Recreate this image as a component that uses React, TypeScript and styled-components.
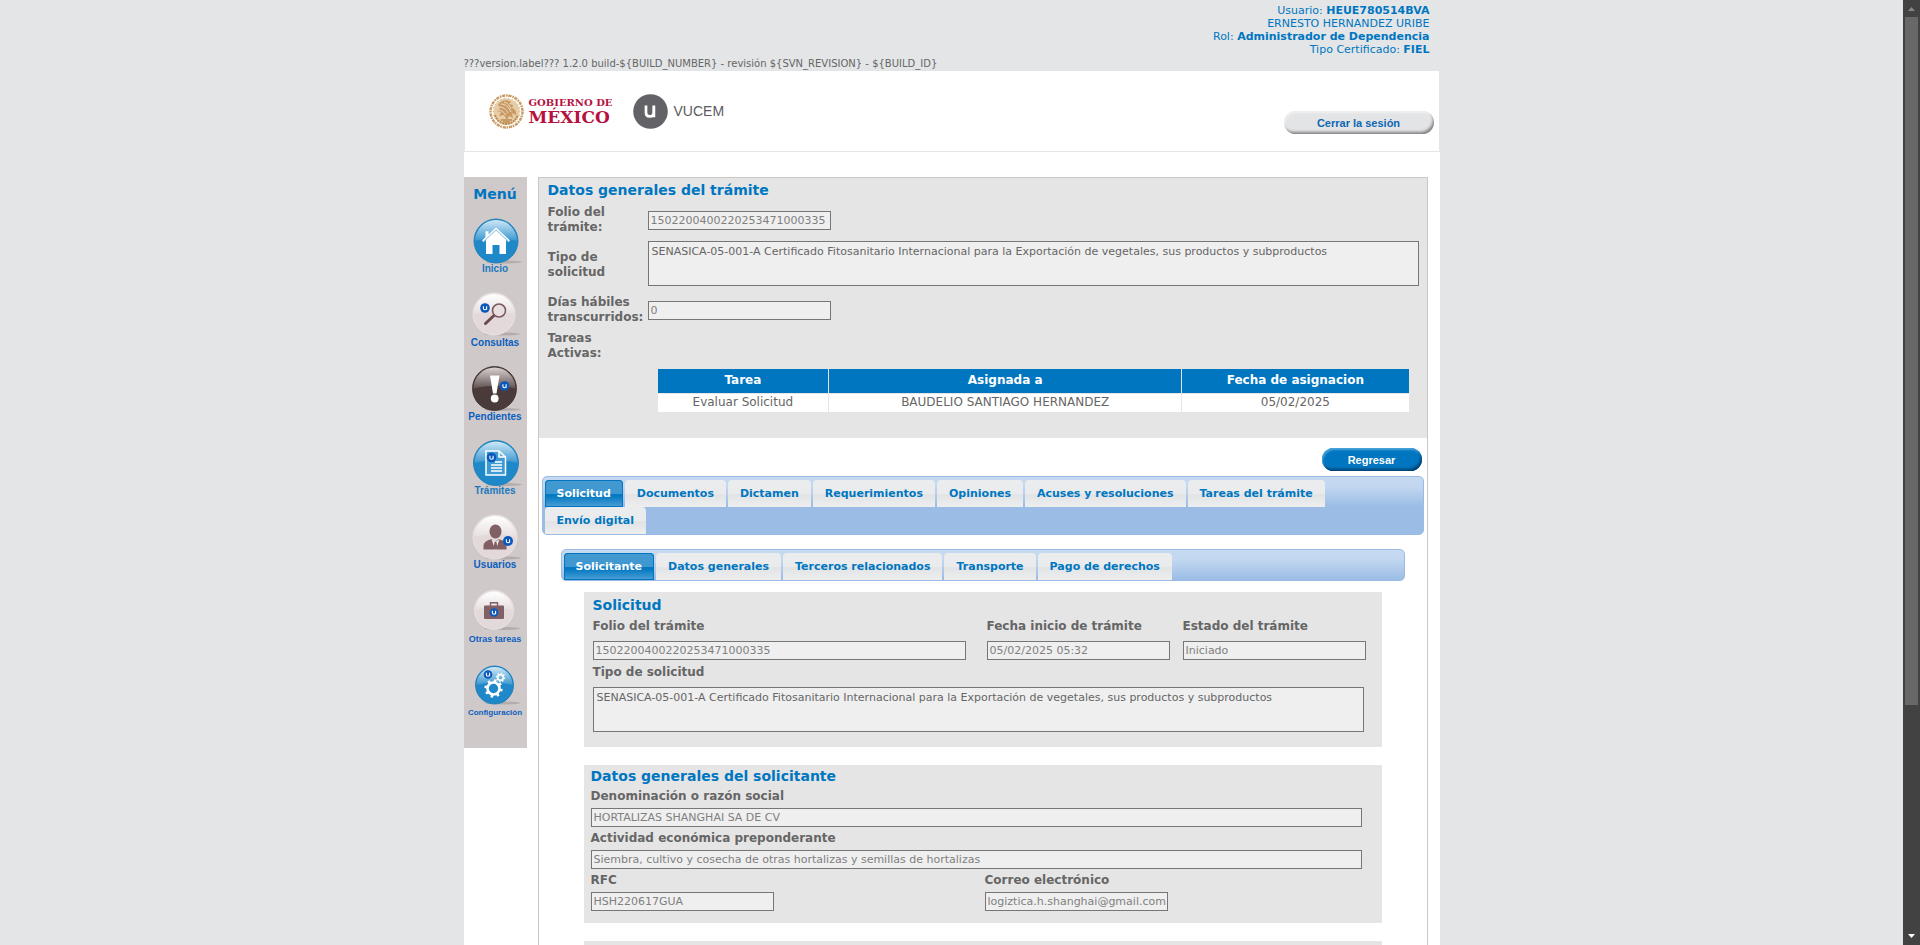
import React from 'react';
import styled, { createGlobalStyle, css } from 'styled-components';

const SANS = '"DejaVu Sans", Verdana, sans-serif';
const ARIAL = '"Liberation Sans", Arial, sans-serif';
const BLUE = '#0076c1';
const TEXT = '#666666';
const PANEL = '#e5e5e5';
const PAGE_BG = '#e3e5e7';

const GlobalStyle = createGlobalStyle`
  *, *::before, *::after { box-sizing: border-box; }
  body {
    margin: 0;
    background: ${PAGE_BG};
    color: ${TEXT};
    font-family: ${SANS};
    font-size: 12px;
  }
  h1, h2, p, ul, dl, dd { margin: 0; padding: 0; }
`;

/* ---------- window frame ---------- */

const Window = styled.div`
  display: flex;
  height: 100vh;
`;

const Viewport = styled.div`
  flex: 1;
  min-width: 0;
  overflow-y: auto;
  scrollbar-width: none;
`;

const ScrollBar = styled.div`
  display: flex;
  flex-direction: column;
  align-items: center;
  width: 17px;
  background: #424242;
`;

const ScrollArrow = styled.svg`
  display: block;
  flex: none;
  width: 17px;
  height: 17px;
`;

const ScrollTrack = styled.div`
  flex: 1;
  width: 13px;
`;

const ScrollThumb = styled.div`
  height: 75.5%;
  background: #686868;
`;

const Page = styled.div`
  max-width: 976px;
  min-height: 100%;
  margin: 0 auto;
  display: flex;
  flex-direction: column;
`;

/* ---------- header ---------- */

const Session = styled.div`
  padding: 4px 10px 0 0;
  color: ${BLUE};
  font-size: 11px;
  line-height: 13px;
  text-align: right;
`;

const Version = styled.p`
  height: 15px;
  font-size: 10px;
  line-height: 15px;
  white-space: nowrap;
`;

const Banner = styled.header`
  display: flex;
  align-items: center;
  height: 80px;
  margin: 0 1px;
  padding: 0 5px 0 24px;
  background: #fff;
`;

const Seal = styled.svg`
  width: 35px;
  height: 35px;
  margin-right: 5px;
`;

const Government = styled.div`
  width: 86px;
  color: #b5123f;
  font-family: "DejaVu Serif", serif;
  font-weight: bold;
  white-space: nowrap;
`;

const GovTop = styled.div`
  font-size: 10px;
  line-height: 11px;
`;

const GovBottom = styled.div`
  font-size: 17px;
  line-height: 18px;
`;

const Vucem = styled.div`
  display: flex;
  align-items: center;
  gap: 6px;
  margin-left: 18px;
  color: #5b5a5e;
  font: 14px ${ARIAL};
`;

const VucemMark = styled.svg`
  width: 35px;
  height: 35px;
`;

const Pill = styled.button<{ $primary?: boolean; $width: number }>`
  width: ${p => p.$width}px;
  height: 23px;
  padding: 0;
  border: 0;
  border-radius: 12px;
  font: bold 11px ${ARIAL};
  cursor: pointer;
  ${p =>
    p.$primary
      ? css`
          color: #fff;
          background: ${BLUE};
          box-shadow: inset -2px -3px 3px -1px #003f6e, inset 1px 2px 2px #4ba3d8;
        `
      : css`
          color: #0c67b4;
          background: #e3e4e5;
          box-shadow: inset -2px -3px 3px -1px #838386, inset 1px 2px 2px #f0f0f0;
        `}
`;

const CloseSession = styled(Pill)`
  margin-left: auto;
  margin-top: 23px;
`;

/* ---------- body ---------- */

const Body = styled.div`
  flex: 1;
  display: flex;
  align-items: flex-start;
  margin-top: 1px;
  padding: 25px 12px 0 0;
  background: #fff;
`;

const Menu = styled.nav`
  width: 63px;
  flex: none;
  margin-right: 11px;
  padding: 8px 0 27px;
  background: #d0c9c9;
  text-align: center;
`;

const MenuTitle = styled.h2`
  color: ${BLUE};
  font-size: 14px;
  line-height: 18px;
`;

const MenuLink = styled.a<{ $size: number; $color: string }>`
  display: flex;
  flex-direction: column;
  align-items: center;
  height: 74px;
  padding-top: 10px;
  color: ${p => p.$color};
  font: bold ${p => p.$size}px/12px ${ARIAL};
  text-decoration: none;
  white-space: nowrap;
`;

const MenuIcon = styled.svg`
  display: block;
  flex: none;
  width: 56px;
  height: 50px;
  overflow: visible;
`;

const Main = styled.main`
  flex: 1;
  min-width: 0;
  border: 1px solid #c8c8c8;
`;

const Title = styled.h2`
  color: ${BLUE};
  font-size: 14px;
  line-height: 18px;
`;

const Summary = styled.section`
  padding: 3px 8px 26px 9px;
  background: ${PANEL};
`;

const SummaryRow = styled.div<{ $minHeight?: number }>`
  display: grid;
  grid-template-columns: 100px 1fr;
  align-items: center;
  min-height: ${p => p.$minHeight ?? 30}px;
  margin-top: 6px;
  line-height: 15px;
  font-weight: bold;
`;

const Label = styled.label`
  font-size: 12px;
  line-height: 15px;
  font-weight: bold;
`;

const TextInput = styled.input<{ $width?: number }>`
  display: block;
  width: ${p => (p.$width ? p.$width + 'px' : '100%')};
  height: 19px;
  padding: 1px 0 1px 2px;
  border: 1px solid #767676;
  border-radius: 0;
  background: #efefef;
  color: #808080;
  font: 11px ${SANS};
`;

const TextArea = styled.textarea`
  display: block;
  align-self: start;
  width: 100%;
  height: 45px;
  padding: 3px;
  border: 1px solid #767676;
  border-radius: 0;
  background: #efefef;
  color: ${TEXT};
  font: 11px/13px ${SANS};
  resize: none;
`;

const TaskTable = styled.table`
  width: calc(100% - 120px);
  margin: 8px 0 0 110px;
  border-spacing: 0;
  border-collapse: collapse;
  table-layout: fixed;
  font-size: 12px;
  line-height: 15px;
  text-align: center;

  th {
    height: 24px;
    padding: 0;
    background: ${BLUE};
    color: #fff;
    border-bottom: 1px solid ${PANEL};
  }
  td {
    height: 19px;
    padding: 0;
    background: #fff;
  }
  th + th, td + td { border-left: 1px solid ${PANEL}; }
`;

const Actions = styled.div`
  display: flex;
  justify-content: flex-end;
  padding: 10px 5px 5px;
`;

const TabBar = styled.div<{ $inset: number }>`
  display: flex;
  flex-wrap: wrap;
  gap: 0 2px;
  margin: 0 ${p => p.$inset}px;
  padding: 3px 2px 0;
  border: 1px solid #9abbe4;
  border-radius: 5px;
  background: linear-gradient(#c5daf1 0, #c3d8f0 9px, #9bbce5 30px);
`;

const Tab = styled.button<{ $active?: boolean }>`
  height: 27px;
  padding: 0 12px;
  border: 0;
  border-radius: 4px 4px 0 0;
  font: bold 11px ${SANS};
  white-space: nowrap;
  cursor: pointer;
  ${p =>
    p.$active
      ? css`
          color: #fff;
          background: linear-gradient(#4399d0 0, #4098d0 50%, #0076c1 54%, #0f7fc5 66%, #4fa0d6 100%);
          box-shadow: inset 0 0 0 1px ${BLUE};
        `
      : css`
          color: ${BLUE};
          background: linear-gradient(#ebecee 0, #e9ebed 50%, #e1e3e5 54%, #eeeeef 100%);
        `}
`;

const Panels = styled.div`
  display: flex;
  flex-direction: column;
  gap: 18px;
  padding: 11px 45px 40px;
`;

const Panel = styled.section<{ $compact?: boolean }>`
  background: ${PANEL};
  padding: ${p => (p.$compact ? '2px 20px 12px 7px' : '4px 16px 15px 9px')};
`;

const EmptyPanel = styled.section`
  min-height: 160px;
  background: ${PANEL};
`;

const Fields = styled.div<{ $columns: string }>`
  display: grid;
  grid-template-columns: ${p => p.$columns};
`;

const Field = styled.div<{ $compact?: boolean }>`
  display: flex;
  flex-direction: column;
  gap: ${p => (p.$compact ? 4 : 7)}px;
  margin-top: ${p => (p.$compact ? 4 : 5)}px;
`;

const WideField = styled(Field)`
  margin-right: 2px;
`;

/* ---------- drawings ---------- */

const tau = Math.PI * 2;
const ring = Array.from({ length: 22 }, (_, i) => (i / 22) * tau);

const MexicoSeal = () => (
  <Seal viewBox="0 0 35 35" aria-label="Escudo Nacional" role="img">
    <circle cx="17.5" cy="17.5" r="16" fill="none" stroke="#c99a63" strokeWidth="2.4" strokeDasharray="3.2 0.9 1.6 0.7" />
    <circle cx="17.5" cy="17.5" r="13.2" fill="#e6cda8" />
    <path d="M9 11c3-5 9-6 13-3l-2 2 4 1-1 3c3 1 5 4 4 7l-4-2 1 5-4-2-2 4-3-5-5 1 2-4-4-1 3-3z" fill="#c99a63" />
    <path d="M10 13c4 0 7 2 9 6M12 10c4 0 8 3 10 8M15 8c4 1 6 4 7 7M9 16c3 0 6 2 8 5" stroke="#f3e4cf" strokeWidth="0.9" fill="none" />
    <path d="M6 21c2 6 7 9 11.5 9s9-3 11.5-9" fill="none" stroke="#bd8a50" strokeWidth="2" strokeDasharray="2 0.8" />
    <path d="M12 26h11M14 28h7" stroke="#bd8a50" strokeWidth="1.3" />
    {ring.map(a => (
      <circle key={a} cx={17.5 + 13.4 * Math.cos(a)} cy={17.5 + 13.4 * Math.sin(a)} r="0.6" fill="#d6b183" />
    ))}
  </Seal>
);

const UMark = ({ x, y, r = 4.5 }: { x: number; y: number; r?: number }) => (
  <g>
    <circle cx={x} cy={y} r={r} fill="#0b58bd" />
    <path
      d={`M${x - 1.6} ${y - 1.8}v2.1q0 1.5 1.6 1.5t1.6-1.5v-2.1v3.6`}
      fill="none"
      stroke="#fff"
      strokeWidth="1.1"
    />
  </g>
);

type Tone = 'blue' | 'light' | 'dark';

const Ball = ({ x, y, r, tone }: { x: number; y: number; r: number; tone: Tone }) => {
  const base = { blue: '#1f88c8', light: '#e3d9da', dark: '#4a3b3a' }[tone];
  const rim = { blue: '#1479b8', light: '#efe8e8', dark: '#3b2d2c' }[tone];
  const top = { blue: '#cfe8f7', light: '#ffffff', dark: '#d8d2d1' }[tone];
  const id = `ball-${tone}-${r}`;
  return (
    <g>
      <ellipse cx={x + 8} cy={y + r - 1} rx="18" ry="1.5" fill="#b3acac" />
      <defs>
        <linearGradient id={id} x1="0" y1="0" x2="0" y2="1">
          <stop offset="0" stopColor={top} />
          <stop offset="1" stopColor={top} stopOpacity="0.15" />
        </linearGradient>
      </defs>
      <circle cx={x} cy={y} r={r} fill={base} stroke={rim} strokeWidth="0.8" />
      <path
        d={`M${x - r + 1} ${y}a${r - 1} ${r - 1} 0 0 1 ${2 * r - 2} 0q${-r + 1} ${-r / 4} ${-2 * r + 2} 0z`}
        fill={`url(#${id})`}
      />
    </g>
  );
};

const gear = (cx: number, cy: number, r: number, w: number) => (
  <g stroke="#fff" fill="none">
    <circle cx={cx} cy={cy} r={r} strokeWidth={w} />
    {Array.from({ length: 8 }, (_, i) => {
      const a = (i / 8) * tau + 0.2;
      return (
        <line
          key={i}
          x1={cx + r * Math.cos(a)}
          y1={cy + r * Math.sin(a)}
          x2={cx + (r + w * 1.2) * Math.cos(a)}
          y2={cy + (r + w * 1.2) * Math.sin(a)}
          strokeWidth={w}
        />
      );
    })}
  </g>
);

const LINK = '#0a5fc0';
const LINK_LIGHT = '#1a78be';

const menu: { label: string; size: number; color: string; icon: React.ReactNode }[] = [
  {
    label: 'Inicio',
    size: 10,
    color: LINK_LIGHT,
    icon: (
      <>
        <Ball x={28} y={26} r={22} tone="blue" />
        <path d="M28 12.5l14 13-1.5 1.8-2.5-2.2v14h-6.5v-9h-7v9H18v-14l-2.5 2.2-1.5-1.8 3.5-3.3v-6h3v3.2z" fill="#fff" />
        <path d="M15.5 26.5L28 15l12.5 11.5" fill="none" stroke="#56a9da" strokeWidth="0.8" />
      </>
    ),
  },
  {
    label: 'Consultas',
    size: 10,
    color: LINK,
    icon: (
      <>
        <Ball x={26} y={25} r={21} tone="light" />
        <path d="M26.5 26L17.5 34.5" stroke="#6b4a4b" strokeWidth="3" strokeLinecap="round" />
        <circle cx="31" cy="21.5" r="6.5" fill="#e9dfe0" stroke="#7b595a" strokeWidth="1.6" />
        <UMark x={17} y={19} r={4.8} />
      </>
    ),
  },
  {
    label: 'Pendientes',
    size: 10,
    color: LINK,
    icon: (
      <>
        <Ball x={26.5} y={25.5} r={22} tone="dark" />
        <path d="M22 12.5h9.5l-3 18h-3.5z" fill="#fff" />
        <circle cx="26.7" cy="35.5" r="3.9" fill="#fff" />
        <UMark x={36.5} y={23} r={4.8} />
      </>
    ),
  },
  {
    label: 'Trámites',
    size: 10,
    color: LINK_LIGHT,
    icon: (
      <>
        <Ball x={28} y={26} r={22.5} tone="blue" />
        <path d="M18 14h13l6.5 6v18H18z M31 14v6h6.5" fill="#3d9ad2" stroke="#fff" strokeWidth="1.5" />
        <path d="M27 25h7M23 28h11M23 31h11M23 34h11" stroke="#fff" strokeWidth="1.3" />
        <UMark x={23.5} y={20.5} r={4.8} />
      </>
    ),
  },
  {
    label: 'Usuarios',
    size: 10,
    color: LINK,
    icon: (
      <>
        <Ball x={27} y={26} r={22} tone="light" />
        <ellipse cx="27.5" cy="20.5" rx="6" ry="7" fill="#806064" />
        <path d="M15.5 38.5v-4q0-4.5 8-6.5l3.5 3 3.5-3q8 2 8 6.5v4z" fill="#806064" />
        <path d="M23.5 28l3.5 10.5h1l3.5-10.5-4 3z" fill="#f2ecec" />
        <path d="M26.5 31h2l1 6-2 1.5-2-1.5z" fill="#806064" />
        <UMark x={40} y={30} r={5} />
      </>
    ),
  },
  {
    label: 'Otras tareas',
    size: 9,
    color: LINK,
    icon: (
      <>
        <Ball x={26} y={25} r={19.5} tone="light" />
        <path d="M22.5 21v-3.3h7V21" fill="none" stroke="#806064" strokeWidth="1.4" />
        <rect x="16" y="20.5" width="20" height="13.5" rx="1" fill="#806064" />
        <UMark x={26} y={27.5} r={4.3} />
      </>
    ),
  },
  {
    label: 'Configuración',
    size: 8,
    color: LINK,
    icon: (
      <>
        <Ball x={26.5} y={26} r={19} tone="blue" />
        {gear(25.5, 29.5, 6, 2.6)}
        {gear(32.5, 18.5, 2.8, 1.6)}
        <UMark x={20} y={15.5} r={4.3} />
      </>
    ),
  },
];

const mainTabs = [
  'Solicitud',
  'Documentos',
  'Dictamen',
  'Requerimientos',
  'Opiniones',
  'Acuses y resoluciones',
  'Tareas del trámite',
  'Envío digital',
];

const innerTabs = ['Solicitante', 'Datos generales', 'Terceros relacionados', 'Transporte', 'Pago de derechos'];

const PRODUCT =
  'SENASICA-05-001-A Certificado Fitosanitario Internacional para la Exportación de vegetales, sus productos y subproductos';
const FOLIO = '1502200400220253471000335';

const Tabs = ({ items, inset }: { items: string[]; inset: number }) => (
  <TabBar role="tablist" $inset={inset}>
    {items.map((t, i) => (
      <Tab key={t} role="tab" type="button" aria-selected={i === 0} $active={i === 0}>
        {t}
      </Tab>
    ))}
  </TabBar>
);

const InnerTabs = styled.div`
  margin-top: 14px;
`;

const TaskCol = styled.col<{ $width?: string }>`
  width: ${p => p.$width ?? 'auto'};
`;

export default function App() {
  return (
    <Window>
      <GlobalStyle />
      <Viewport>
        <Page>
          <Session>
            <div>Usuario: <b>HEUE780514BVA</b></div>
            <div>ERNESTO HERNANDEZ URIBE</div>
            <div>Rol: <b>Administrador de Dependencia</b></div>
            <div>Tipo Certificado: <b>FIEL</b></div>
          </Session>
          <Version>{'???version.label??? 1.2.0 build-${BUILD_NUMBER} - revisión ${SVN_REVISION} - ${BUILD_ID}'}</Version>
          <Banner>
            <MexicoSeal />
            <Government>
              <GovTop>GOBIERNO DE</GovTop>
              <GovBottom>MÉXICO</GovBottom>
            </Government>
            <Vucem>
              <VucemMark viewBox="0 0 35 35" aria-hidden="true">
                <circle cx="17.5" cy="17.5" r="17.3" fill="#636266" />
                <path d="M13 11.5v7.2q0 3.6 3.7 3.6 4 0 4-3.9v-6.9M20.9 11.5v11.8" fill="none" stroke="#fff" strokeWidth="2.7" />
              </VucemMark>
              VUCEM
            </Vucem>
            <CloseSession type="button" $width={150}>Cerrar la sesión</CloseSession>
          </Banner>
          <Body>
            <Menu>
              <MenuTitle>Menú</MenuTitle>
              {menu.map(m => (
                <MenuLink key={m.label} href="#" $size={m.size} $color={m.color}>
                  <MenuIcon viewBox="-1 -2 56 50" aria-hidden="true">{m.icon}</MenuIcon>
                  {m.label}
                </MenuLink>
              ))}
            </Menu>
            <Main>
              <Summary>
                <Title>Datos generales del trámite</Title>
                <SummaryRow>
                  <Label htmlFor="folio">Folio del trámite:</Label>
                  <TextInput id="folio" $width={183} readOnly value={FOLIO} />
                </SummaryRow>
                <SummaryRow $minHeight={48}>
                  <Label htmlFor="tipo">Tipo de solicitud</Label>
                  <TextArea id="tipo" readOnly value={PRODUCT} />
                </SummaryRow>
                <SummaryRow>
                  <Label htmlFor="dias">Días hábiles transcurridos:</Label>
                  <TextInput id="dias" $width={183} readOnly value="0" />
                </SummaryRow>
                <SummaryRow>
                  <div>Tareas Activas:</div>
                </SummaryRow>
                <TaskTable>
                  <colgroup>
                    <TaskCol $width="22.8%" />
                    <TaskCol $width="47%" />
                    <TaskCol />
                  </colgroup>
                  <thead>
                    <tr><th>Tarea</th><th>Asignada a</th><th>Fecha de asignacion</th></tr>
                  </thead>
                  <tbody>
                    <tr><td>Evaluar Solicitud</td><td>BAUDELIO SANTIAGO HERNANDEZ</td><td>05/02/2025</td></tr>
                  </tbody>
                </TaskTable>
              </Summary>
              <Actions>
                <Pill type="button" $primary $width={100}>Regresar</Pill>
              </Actions>
              <Tabs items={mainTabs} inset={3} />
              <InnerTabs>
                <Tabs items={innerTabs} inset={22} />
              </InnerTabs>
              <Panels>
                <Panel>
                  <Title>Solicitud</Title>
                  <Fields $columns="394fr 196fr 183fr">
                    <Field>
                      <Label htmlFor="s-folio">Folio del trámite</Label>
                      <TextInput id="s-folio" $width={373} readOnly value={FOLIO} />
                    </Field>
                    <Field>
                      <Label htmlFor="s-fecha">Fecha inicio de trámite</Label>
                      <TextInput id="s-fecha" $width={183} readOnly value="05/02/2025 05:32" />
                    </Field>
                    <Field>
                      <Label htmlFor="s-estado">Estado del trámite</Label>
                      <TextInput id="s-estado" $width={183} readOnly value="Iniciado" />
                    </Field>
                  </Fields>
                  <WideField>
                    <Label htmlFor="s-tipo">Tipo de solicitud</Label>
                    <TextArea id="s-tipo" readOnly value={PRODUCT} />
                  </WideField>
                </Panel>
                <Panel $compact>
                  <Title>Datos generales del solicitante</Title>
                  <Field $compact>
                    <Label htmlFor="razon">Denominación o razón social</Label>
                    <TextInput id="razon" readOnly value="HORTALIZAS SHANGHAI SA DE CV" />
                  </Field>
                  <Field $compact>
                    <Label htmlFor="actividad">Actividad económica preponderante</Label>
                    <TextInput id="actividad" readOnly value="Siembra, cultivo y cosecha de otras hortalizas y semillas de hortalizas" />
                  </Field>
                  <Fields $columns="394fr 377fr">
                    <Field $compact>
                      <Label htmlFor="rfc">RFC</Label>
                      <TextInput id="rfc" $width={183} readOnly value="HSH220617GUA" />
                    </Field>
                    <Field $compact>
                      <Label htmlFor="correo">Correo electrónico</Label>
                      <TextInput id="correo" $width={183} readOnly value="logiztica.h.shanghai@gmail.com" />
                    </Field>
                  </Fields>
                </Panel>
                <EmptyPanel />
              </Panels>
            </Main>
          </Body>
        </Page>
      </Viewport>
      <ScrollBar aria-hidden="true">
        <ScrollArrow viewBox="0 0 17 17"><path d="M5 11l3.5-4 3.5 4z" fill="#868686" /></ScrollArrow>
        <ScrollTrack><ScrollThumb /></ScrollTrack>
        <ScrollArrow viewBox="0 0 17 17"><path d="M5 6l3.5 4L12 6z" fill="#fff" /></ScrollArrow>
      </ScrollBar>
    </Window>
  );
}
